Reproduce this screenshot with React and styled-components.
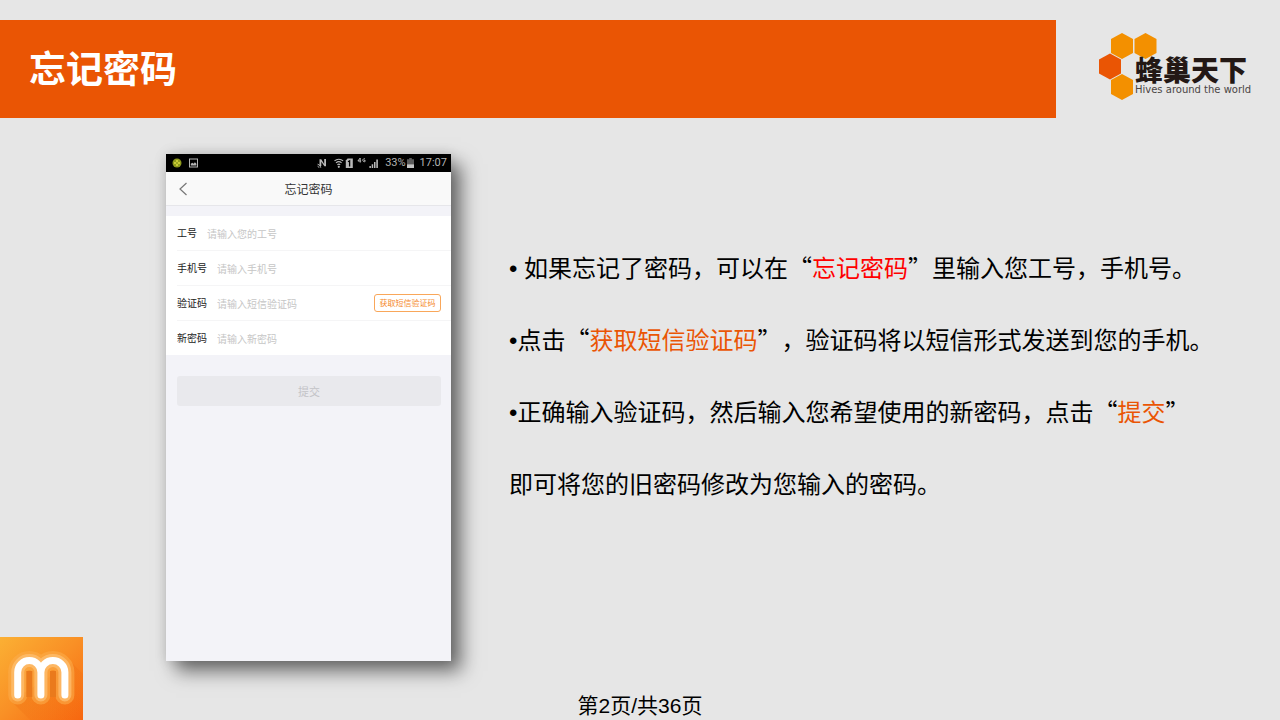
import React from "react";
import styled, { createGlobalStyle } from "styled-components";

const GlobalStyle = createGlobalStyle`
  *, *::before, *::after { box-sizing: border-box; }
  body {
    margin: 0;
    background: #e6e6e6;
    color: #000;
    font-family: "Noto Sans CJK SC", sans-serif;
    text-spacing-trim: space-all;
  }
`;

const Slide = styled.div`
  min-height: 100vh;
  display: grid;
  grid-template-columns: 83px 1fr;
  grid-template-rows: auto 1fr auto;
`;

const Header = styled.header`
  grid-column: 1 / -1;
  display: flex;
  align-items: center;
  padding-top: 20px;
`;

const TitleBar = styled.div`
  width: 82.5%;
  height: 98px;
  display: flex;
  align-items: center;
  padding: 0 0 4px 29px;
  background: #ea5504;
`;

const Title = styled.h1`
  margin: 0;
  color: #fff;
  font-size: 37px;
  font-weight: 700;
  line-height: 54px;
`;

const Brand = styled.div`
  flex: 1;
  display: grid;
  justify-content: start;
  align-items: center;
  padding-left: 43px;
`;

const Hexagons = styled.svg`
  grid-area: 1 / 1;
  width: 60px;
  height: 74px;
`;

const BrandText = styled.div`
  grid-area: 1 / 1;
  padding: 14px 0 0 36px;
  white-space: nowrap;
`;

const BrandName = styled.div`
  color: #231815;
  font-size: 28px;
  font-weight: 900;
  line-height: 28px;
`;

const BrandMotto = styled.div`
  color: #4a4544;
  font-family: "DejaVu Sans", sans-serif;
  font-size: 10px;
  line-height: 14px;
`;

const Main = styled.main`
  grid-area: 2 / 2;
  display: flex;
  align-items: flex-start;
  padding: 36px 0 0 83px;
`;

const Phone = styled.section`
  flex: none;
  width: 285px;
  height: 507px;
  background: #f3f3f8;
  box-shadow: 10px 10px 18px rgba(0, 0, 0, 0.55), 0 0 12px rgba(0, 0, 0, 0.12);
`;

const StatusBar = styled.div`
  height: 18px;
  display: flex;
  align-items: center;
  justify-content: space-between;
  padding: 0 4px 0 6px;
  background: #000;
  color: #b4b4b4;
  font-family: Roboto, sans-serif;
  font-size: 11px;
  line-height: 18px;
`;

const StatusGroup = styled.div`
  display: flex;
  align-items: center;
  gap: ${(p) => p.$gap}px;
`;

const StatusIcon = styled.svg`
  display: block;
  flex: none;
`;

const NavBar = styled.div`
  height: 34px;
  display: grid;
  grid-template-columns: 36px 1fr 36px;
  align-items: center;
  background: #f9f9f9;
  border-bottom: 1px solid #e6e6ea;
`;

const BackButton = styled.button`
  height: 33px;
  padding: 0 0 0 12px;
  border: 0;
  background: none;
  display: flex;
  align-items: center;
`;

const NavTitle = styled.h2`
  margin: 0;
  text-align: center;
  font-size: 12px;
  font-weight: 400;
  line-height: 18px;
  color: #333;
`;

const Form = styled.form`
  margin: 10px 0 0;
`;

const Fields = styled.div`
  background: #fff;
  padding-left: 11px;
`;

const Field = styled.div`
  display: flex;
  align-items: center;
  gap: 10px;
  padding-right: 10px;
  border-bottom: 1px solid #f5f5f6;
  &:last-child { border-bottom: 0; }
`;

const Label = styled.label`
  flex: none;
  font-size: 10px;
  line-height: 34px;
  color: #222;
`;

const Input = styled.input`
  flex: 1;
  min-width: 0;
  height: 34px;
  padding: 0;
  border: 0;
  outline: 0;
  background: none;
  font-family: inherit;
  font-size: 10px;
  &::placeholder { color: #c6c6c6; opacity: 1; }
`;

const CodeButton = styled.button`
  flex: none;
  width: 67px;
  height: 18px;
  padding: 0;
  border: 1px solid #f9a75a;
  border-radius: 3px;
  background: #fff;
  color: #f58a2c;
  font-family: inherit;
  font-size: 8px;
  line-height: 16px;
`;

const Submit = styled.button`
  display: block;
  width: calc(100% - 21px);
  height: 30px;
  margin: 21px 10px 0 11px;
  padding: 0;
  border: 0;
  border-radius: 3px;
  background: #e9e9ed;
  color: #c3c3c7;
  font-family: inherit;
  font-size: 11px;
`;

const Steps = styled.ul`
  flex: 1;
  margin: 77px 0 0;
  padding: 0 0 0 58px;
  list-style: none;
  font-size: 24px;
  line-height: 72px;
`;

const Step = styled.li`
  white-space: nowrap;
`;

const Bullet = styled.span`
  font-family: "Liberation Sans", sans-serif;
  line-height: 24px;
`;

const Mark = styled.em`
  font-style: normal;
  color: ${(p) => p.$color};
`;

const Tile = styled.svg`
  grid-area: 2 / 1 / 4 / 2;
  align-self: end;
  display: block;
  width: 83px;
  height: 83px;
`;

const Footer = styled.footer`
  grid-area: 3 / 1 / 4 / -1;
  text-align: center;
  font-family: "Liberation Sans", "Noto Sans CJK SC", sans-serif;
  font-size: 21px;
  line-height: 28px;
`;

const hex = (cx, cy) =>
  [[0, -13], [11, -7], [11, 7], [0, 13], [-11, 7], [-11, -7]]
    .map(([x, y]) => `${cx + x},${cy + y}`)
    .join(" ");

const fields = [
  { id: "staff", label: "工号", hint: "请输入您的工号" },
  { id: "phone", label: "手机号", hint: "请输入手机号" },
  { id: "code", label: "验证码", hint: "请输入短信验证码", action: "获取短信验证码" },
  { id: "password", label: "新密码", hint: "请输入新密码", type: "password" },
];

function BrandLogo() {
  return (
    <Brand>
      <Hexagons viewBox="0 0 60 74" aria-hidden="true">
        <polygon points={hex(23, 14)} fill="#f39000" />
        <polygon points={hex(46.5, 14)} fill="#f39000" />
        <polygon points={hex(11, 34.5)} fill="#ea5504" />
        <polygon points={hex(23, 55)} fill="#f39000" />
      </Hexagons>
      <BrandText>
        <BrandName>蜂巢天下</BrandName>
        <BrandMotto>Hives around the world</BrandMotto>
      </BrandText>
    </Brand>
  );
}

function PhoneStatus() {
  return (
    <StatusBar>
      <StatusGroup $gap={7}>
        <StatusIcon width="10" height="10" viewBox="0 0 10 10">
          <circle cx="5" cy="5" r="4.5" fill="#8f9a1c" />
          <path d="M5 2v6M2 5h6" stroke="#c8cb36" strokeWidth="2" />
          <circle cx="5" cy="5" r="1" fill="#8f9a1c" />
        </StatusIcon>
        <StatusIcon width="9" height="10" viewBox="0 0 9 10">
          <rect x="0.5" y="1" width="8" height="8" fill="none" stroke="#b4b4b4" />
          <path d="M1.8 7.5V5.8l1.5-1 1.3 1 1.3-1.6 1.5 1.6v1.7z" fill="#b4b4b4" />
        </StatusIcon>
      </StatusGroup>
      <StatusGroup $gap={6}>
        <StatusIcon width="63" height="12" viewBox="0 0 63 12" fill="#b8b8b8">
          <path d="M3.5 9V2.2h1.8L8.2 7V2H10v7.3H8.4L5.3 4.7V9z" />
          <path d="M1.6 7.2a4 4 0 0 1 3.2 3.5M1.6 9.2a2 2 0 0 1 1.4 1.5" fill="none" stroke="#b8b8b8" />
          <path d="M18.5 3.9a6.4 6.4 0 0 1 8.6 0M20 5.9a4.4 4.4 0 0 1 5.6 0M21.4 7.8a2.2 2.2 0 0 1 2.8 0" fill="none" stroke="#b8b8b8" strokeWidth="1.2" />
          <circle cx="22.8" cy="9.8" r="1.1" />
          <path d="M31.6 1.6h5.2V11h-7V3.6z" />
          <path d="M32 4.8l1.6-1v5.6" fill="none" stroke="#000" strokeWidth="1.3" />
          <path d="M44.2 1L41.9 4h3.3M44.2 1v4.6" fill="none" stroke="#b8b8b8" strokeWidth="1" />
          <path d="M49 1.9a1.5 1.5 0 1 0 .1 2.6V3.3h-1.2" fill="none" stroke="#b8b8b8" strokeWidth="1" />
          <path d="M53.4 9h1.5v2h-1.5zM55.7 7.2h1.5V11h-1.5zM58 5h1.5v6H58zM60.3 2.4h1.6V11h-1.6z" />
        </StatusIcon>
        <StatusGroup $gap={1}>
          <span>33%</span>
          <StatusIcon width="7" height="10" viewBox="0 0 7 10">
            <path d="M2.2 0h2.6v1.3H7V10H0V1.3h2.2z" fill="#5c5c5c" />
            <path d="M0 6.4h7V10H0z" fill="#c4c4c4" />
          </StatusIcon>
        </StatusGroup>
        <span>17:07</span>
      </StatusGroup>
    </StatusBar>
  );
}

function PhoneScreen() {
  return (
    <Phone>
      <PhoneStatus />
      <NavBar>
        <BackButton type="button" aria-label="返回">
          <StatusIcon width="10" height="14" viewBox="0 0 10 14">
            <path d="M8.5 1L2 7l6.5 6" fill="none" stroke="#777" strokeWidth="1.2" />
          </StatusIcon>
        </BackButton>
        <NavTitle>忘记密码</NavTitle>
      </NavBar>
      <Form onSubmit={(e) => e.preventDefault()}>
        <Fields>
          {fields.map((f) => (
            <Field key={f.id}>
              <Label htmlFor={f.id}>{f.label}</Label>
              <Input id={f.id} type={f.type || "text"} placeholder={f.hint} />
              {f.action && <CodeButton type="button">{f.action}</CodeButton>}
            </Field>
          ))}
        </Fields>
        <Submit type="submit">提交</Submit>
      </Form>
    </Phone>
  );
}

function MTile() {
  const m = "M17.7 58V35.2a11.6 11.6 0 0 1 23.2 0V58M40.9 35.2a12 11.6 0 0 1 24 0V58";
  return (
    <Tile viewBox="0 0 83 83" role="img" aria-label="m">
      <defs>
        <linearGradient id="tile" x1="0" y1="0" x2="1" y2="1">
          <stop offset="0" stopColor="#fbb034" />
          <stop offset="0.5" stopColor="#f98f25" />
          <stop offset="1" stopColor="#f7660f" />
        </linearGradient>
        <linearGradient id="shade" x1="0" y1="0" x2="1" y2="1">
          <stop offset="0" stopColor="#e8690b" stopOpacity="0.5" />
          <stop offset="1" stopColor="#f06a10" stopOpacity="0" />
        </linearGradient>
      </defs>
      <rect width="83" height="83" fill="url(#tile)" />
      <path d="M11 64L72 26l11 11v46H30z" fill="url(#shade)" />
      <g fill="none" strokeLinecap="round" strokeLinejoin="round">
        <path d={m} stroke="#fbab4a" strokeOpacity="0.6" strokeWidth="19" />
        <path d={m} stroke="#fdbf72" strokeOpacity="0.75" strokeWidth="13" />
        <path d="M29.3 34v26M53 34v26" stroke="#ea7a1c" strokeWidth="6" strokeLinecap="butt" />
        <path d={m} stroke="#fff" strokeWidth="7" />
      </g>
    </Tile>
  );
}

export default function App() {
  return (
    <>
      <GlobalStyle />
      <Slide lang="zh-CN">
        <Header>
          <TitleBar>
            <Title>忘记密码</Title>
          </TitleBar>
          <BrandLogo />
        </Header>
        <Main>
          <PhoneScreen />
          <Steps>
            <Step>
              <Bullet>• </Bullet>如果忘记了密码，可以在“<Mark $color="#ff0000">忘记密码</Mark>”里输入您工号，手机号。
            </Step>
            <Step>
              <Bullet>•</Bullet>点击“<Mark $color="#ea5504">获取短信验证码</Mark>”，验证码将以短信形式发送到您的手机。
            </Step>
            <Step>
              <Bullet>•</Bullet>正确输入验证码，然后输入您希望使用的新密码，点击“<Mark $color="#ea5504">提交</Mark>”
              <br />
              即可将您的旧密码修改为您输入的密码。
            </Step>
          </Steps>
        </Main>
        <MTile />
        <Footer>第2页/共36页</Footer>
      </Slide>
    </>
  );
}
